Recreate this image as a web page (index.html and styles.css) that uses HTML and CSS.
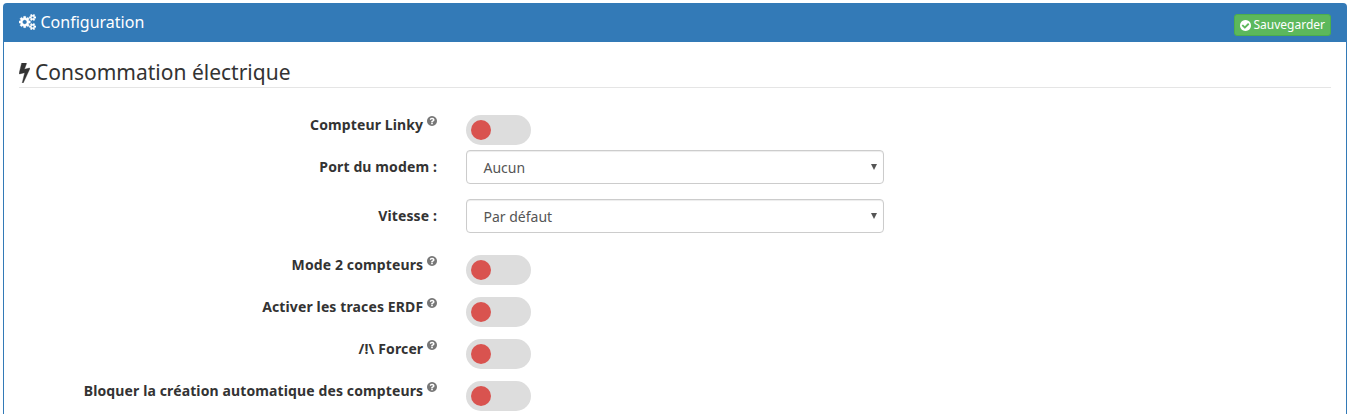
FILE: index.html
```html
<!DOCTYPE html>
<html lang="fr">
<head>
<meta charset="utf-8">
<title>Configuration</title>
<link rel="stylesheet" href="styles.css">
</head>
<body>
<svg class="sprite" aria-hidden="true">
  <symbol id="question" viewBox="128 128 1536 1536"><path d="M1024 1376v-192q0-14-9-23t-23-9h-192q-14 0-23 9t-9 23v192q0 14 9 23t23 9h192q14 0 23-9t9-23zm256-672q0-88-55.500-163t-138.500-116-170-41q-243 0-371 213-15 24 8 42l132 100q7 6 19 6 16 0 25-12 53-68 86-92 34-24 86-24 48 0 85.500 26t37.500 59q0 38-20 61t-68 45q-63 28-115.500 86.500t-52.500 125.500v36q0 14 9 23t23 9h192q14 0 23-9t9-23q0-19 21.500-49.500t54.500-49.500q32-18 49-28.500t46-35 44.500-48 28-60.500 12.500-81zm384 192q0 209-103 385.500t-279.500 279.500-385.500 103-385.500-103-279.500-279.500-103-385.500 103-385.500 279.500-279.500 385.500-103 385.500 103 279.500 279.500 103 385.500z"/></symbol>
</svg>
<main class="panel">
  <header class="panel-heading">
    <h1 class="panel-title">
      <svg class="icon-cogs" viewBox="-64 0 1920 1792"><path d="M832 896q0-106-75-181t-181-75-181 75-75 181 75 181 181 75 181-75 75-181zm768 512q0-52-38-90t-90-38-90 38-38 90q0 53 37.500 90.500t90.500 37.500 90.500-37.500 37.500-90.500zm0-1024q0-52-38-90t-90-38-90 38-38 90q0 53 37.500 90.500t90.500 37.500 90.500-37.500 37.500-90.500zm-384 421v185q0 10-7 19.500t-16 10.500l-155 24q-11 35-32 76 34 48 90 115 7 11 7 20 0 12-7 19-23 30-82.500 89.500t-78.500 59.500q-11 0-21-7l-115-90q-37 19-77 31-11 108-23 155-7 24-30 24h-186q-11 0-20-7.500t-10-17.500l-23-153q-34-10-75-31l-118 89q-7 7-20 7-11 0-21-8-144-133-144-160 0-9 7-19 10-14 41-53t47-61q-23-44-35-82l-152-24q-10-1-17-9.500t-7-19.500v-185q0-10 7-19.500t16-10.500l155-24q11-35 32-76-34-48-90-115-7-11-7-20 0-12 7-20 22-30 82-89t79-59q11 0 21 7l115 90q34-18 77-32 11-108 23-154 7-24 30-24h186q11 0 20 7.500t10 17.500l23 153q34 10 75 31l118-89q8-7 20-7 11 0 21 8 144 133 144 160 0 8-7 19-12 16-42 54t-45 60q23 48 34 82l152 23q10 2 17 10.500t7 19.500zm640 533v140q0 16-149 31-12 27-30 52 51 113 51 138 0 4-4 7-122 71-124 71-8 0-46-47t-52-68q-20 2-30 2t-30-2q-14 21-52 68t-46 47q-2 0-124-71-4-3-4-7 0-25 51-138-18-25-30-52-149-15-149-31v-140q0-16 149-31 13-29 30-52-51-113-51-138 0-4 4-7 4-2 35-20t59-34 30-16q8 0 46 46.500t52 67.500q20-2 30-2t30 2q51-71 92-112l6-2q4 0 124 70 4 3 4 7 0 25-51 138 17 23 30 52 149 15 149 31zm0-1024v140q0 16-149 31-12 27-30 52 51 113 51 138 0 4-4 7-122 71-124 71-8 0-46-47t-52-68q-20 2-30 2t-30-2q-14 21-52 68t-46 47q-2 0-124-71-4-3-4-7 0-25 51-138-18-25-30-52-149-15-149-31v-140q0-16 149-31 13-29 30-52-51-113-51-138 0-4 4-7 4-2 35-20t59-34 30-16q8 0 46 46.500t52 67.500q20-2 30-2t30 2q51-71 92-112l6-2q4 0 124 70 4 3 4 7 0 25-51 138 17 23 30 52 149 15 149 31z"/></svg>
      <span>Configuration</span>
    </h1>
    <button class="save" type="button">
      <svg class="icon-check" viewBox="128 128 1536 1536"><path d="M1412 734q0-28-18-46l-91-90q-19-19-45-19t-45 19l-408 407-226-226q-19-19-45-19t-45 19l-91 90q-18 18-18 46 0 27 18 45l362 362q19 19 45 19 27 0 46-19l543-543q18-18 18-45zm252 162q0 209-103 385.500t-279.500 279.500-385.500 103-385.500-103-279.500-279.500-103-385.500 103-385.500 279.500-279.500 385.500-103 385.500 103 279.500 279.500 103 385.500z"/></svg>
      <span>Sauvegarder</span>
    </button>
  </header>
  <section class="panel-body">
    <h2 class="legend">
      <svg class="icon-bolt" viewBox="0 128 896 1664"><path d="M885 566q18 20 7 44l-540 1157q-13 25-42 25-4 0-14-2-17-5-25.500-19t-4.500-30l197-808-406 101q-4 1-12 1-18 0-31-11-18-15-13-39l201-825q4-14 16-23t28-9h328q19 0 32 12.500t13 29.500q0 8-5 18l-171 463 396-98q8-2 12-2 19 0 34 15z"/></svg>
      <span>Consommation électrique</span>
    </h2>
    <form class="form">
      <div class="row">
        <span class="label">Compteur Linky <svg class="help"><use href="#question"/></svg></span>
        <span class="toggle"></span>
      </div>
      <div class="row row-select">
        <span class="label">Port du modem :</span>
        <span class="select"><span>Aucun</span><svg class="caret" viewBox="0 0 6 6"><path d="M0 0h6L3 6z"/></svg></span>
      </div>
      <div class="row row-select">
        <span class="label">Vitesse :</span>
        <span class="select"><span>Par défaut</span><svg class="caret" viewBox="0 0 6 6"><path d="M0 0h6L3 6z"/></svg></span>
      </div>
      <div class="row row-spaced">
        <span class="label">Mode 2 compteurs <svg class="help"><use href="#question"/></svg></span>
        <span class="toggle"></span>
      </div>
      <div class="row row-spaced">
        <span class="label">Activer les traces ERDF <svg class="help"><use href="#question"/></svg></span>
        <span class="toggle"></span>
      </div>
      <div class="row row-spaced">
        <span class="label">/!\ Forcer <svg class="help"><use href="#question"/></svg></span>
        <span class="toggle"></span>
      </div>
      <div class="row row-spaced">
        <span class="label">Bloquer la création automatique des compteurs <svg class="help"><use href="#question"/></svg></span>
        <span class="toggle"></span>
      </div>
    </form>
  </section>
</main>
</body>
</html>
```
FILE: styles.css
```css
* { box-sizing: border-box; }
html, body { height: 100%; }
body {
  margin: 0;
  padding: 3px 3px 0;
  background: #fff;
  color: #333;
  font: 14px/20px "Noto Sans", "Open Sans", sans-serif;
}
svg { fill: currentColor; flex: none; }
.sprite { display: none; }
.panel {
  height: 100%;
  border: 1px solid #337ab7;
  border-bottom: 0;
  border-radius: 4px 4px 0 0;
}
.panel-heading {
  display: flex;
  justify-content: space-between;
  align-items: flex-start;
  height: 38px;
  padding: 10px 15px 0;
  background: #337ab7;
  color: #fff;
}
.panel-title {
  display: flex;
  align-items: center;
  gap: 4.5px;
  margin: -1px 0 0;
  font-size: 16px;
  line-height: 18px;
  font-weight: 400;
}
.icon-cogs {
  width: 17px;
  height: 16px;
  stroke: currentColor;
  stroke-width: 40px;
}
.save {
  display: flex;
  align-items: center;
  gap: 2.5px;
  width: 97px;
  height: 22px;
  padding: 0 5px;
  border: 1px solid #4cae4c;
  border-radius: 3px;
  background: #5cb85c;
  color: #fff;
  font: 12px/18px "Noto Sans", "Open Sans", sans-serif;
  white-space: nowrap;
}
.icon-check { width: 11px; height: 11px; }
.panel-body { padding: 15px 15px 0; }
.legend {
  display: flex;
  align-items: center;
  gap: 5px;
  height: 31px;
  margin: 0 0 27px;
  border-bottom: 1px solid #e5e5e5;
  font-size: 21px;
  line-height: 30px;
  font-weight: 400;
}
.icon-bolt {
  width: 11px;
  height: 20px;
  margin-top: 2px;
  stroke: currentColor;
  stroke-width: 30px;
}
.row {
  display: grid;
  grid-template-columns: 418px 418px;
  column-gap: 29px;
  height: 35px;
}
.row-select { height: 49px; }
.row-spaced { height: 42px; padding-top: 7px; }
.row:last-child { height: 37px; }
.label {
  font-weight: 700;
  letter-spacing: .12px;
  text-align: right;
  white-space: nowrap;
}
.row-select .label { padding-top: 7px; }
.help {
  width: 10px;
  height: 10px;
  color: #777;
  vertical-align: 4px;
}
.toggle {
  display: flex;
  align-items: center;
  width: 65px;
  height: 30px;
  padding-left: 5px;
  border-radius: 15px;
  background: #ddd;
}
.toggle::before {
  content: "";
  width: 20px;
  height: 20px;
  border-radius: 50%;
  background: #d9534f;
}
.select {
  display: flex;
  justify-content: space-between;
  align-items: center;
  height: 34px;
  padding: 1px 6px 0 16.5px;
  border: 1px solid #ccc;
  border-radius: 4px;
  box-shadow: inset 0 1px 1px rgba(0, 0, 0, .075);
  color: #555;
}
.caret { width: 6px; height: 6px; margin-top: -2px; }
```
